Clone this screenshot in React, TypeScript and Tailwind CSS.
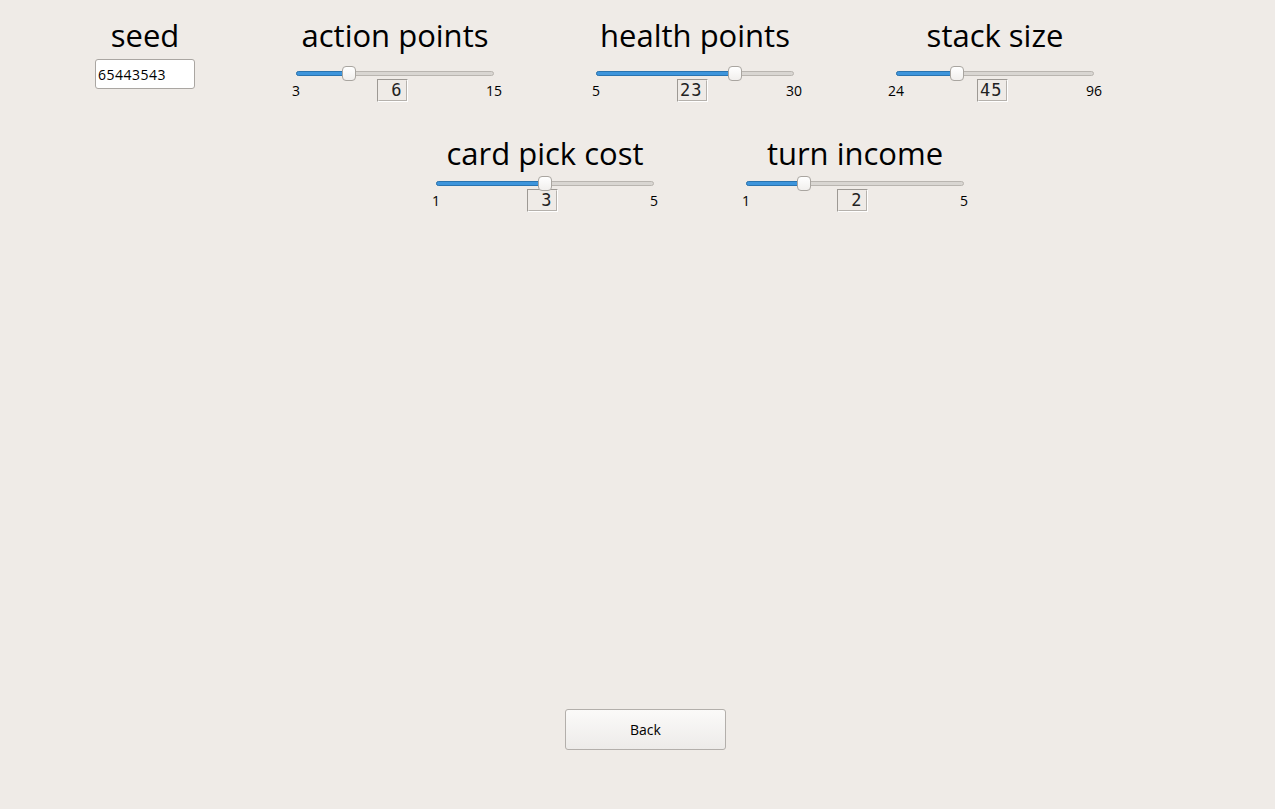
import React from "react";

type SliderProps = {
  title: string;
  min: number;
  max: number;
  value: number;
  trackWidth: number;
};

const titleFont = { fontFamily: '"Open Sans", "DejaVu Sans", sans-serif' };
const uiFont = { fontFamily: '"Open Sans", "DejaVu Sans", sans-serif' };

const Slider = ({ min, max, value, trackWidth }: Omit<SliderProps, "title">) => {
  const handle = 14;
  const left = ((value - min) / (max - min)) * (trackWidth - handle);
  return (
    <div className="relative h-[15px]" style={{ width: trackWidth }}>
      <div className="absolute left-0 right-0 top-[5px] h-[5px] rounded-full border border-[#b9b5b0] bg-[#d9d6d2]" />
      <div
        className="absolute left-0 top-[5px] h-[5px] rounded-l-full border border-[#2a74b0] bg-[#3d95dc]"
        style={{ width: left + handle / 2 }}
      />
      <div
        className="absolute top-0 h-[15px] w-[14px] rounded-[4px] border border-[#a9a5a0] bg-gradient-to-b from-white to-[#f1efed]"
        style={{ left }}
      />
    </div>
  );
};

const Lcd = ({ value }: { value: number }) => (
  <div className="h-[23px] w-[31px] border border-t-[#9d9994] border-l-[#9d9994] border-b-white border-r-white">
    <div
      className="flex h-full w-full items-center justify-end border border-b-[#b5b1ac] border-r-[#b5b1ac] border-t-transparent border-l-transparent pr-[3px] text-[17px] leading-none font-light text-[#222] tracking-[1px]"
      style={{ fontFamily: '"DejaVu Sans Mono", "Liberation Mono", monospace' }}
    >
      {value}
    </div>
  </div>
);

const SliderBox = ({ title, min, max, value, trackWidth, titleGap }: SliderProps & { titleGap: string }) => (
  <div className="flex w-[230px] flex-col items-center">
    <div className={`text-[31px] leading-[34px] text-black ${titleGap}`} style={titleFont}>
      {title}
    </div>
    <Slider min={min} max={max} value={value} trackWidth={trackWidth} />
    <div className="mt-[-2px] flex items-start" style={{ width: trackWidth }}>
      <div className="flex w-0 justify-center">
        <span className="mt-[3px] whitespace-nowrap text-[14px] leading-[18px] text-black" style={uiFont}>
          {min}
        </span>
      </div>
      <div className="flex flex-1 justify-center pr-[6px]">
        <Lcd value={value} />
      </div>
      <div className="flex w-0 justify-center">
        <span className="mt-[3px] whitespace-nowrap text-[14px] leading-[18px] text-black" style={uiFont}>
          {max}
        </span>
      </div>
    </div>
  </div>
);

export default function App() {
  return (
    <div className="flex h-[809px] w-full flex-col bg-[#efebe7]">
      <div className="flex items-start gap-[70px] pl-[80px] pt-[18px]">
        <div className="flex w-[130px] flex-col items-center">
          <div className="mb-[7px] text-[31px] leading-[34px] text-black" style={titleFont}>
            seed
          </div>
          <div
            className="flex h-[30px] w-[100px] items-center rounded-[3px] border border-[#aaa6a2] bg-white pl-[2px] text-[14px] tracking-[0.5px] text-black"
            style={uiFont}
          >
            65443543
          </div>
        </div>
        <SliderBox title="action points" min={3} max={15} value={6} trackWidth={198} titleGap="mb-[14px]" />
        <SliderBox title="health points" min={5} max={30} value={23} trackWidth={198} titleGap="mb-[14px]" />
        <SliderBox title="stack size" min={24} max={96} value={45} trackWidth={198} titleGap="mb-[14px]" />
      </div>
      <div className="flex items-start gap-[80px] pl-[430px] pt-[34px]">
        <SliderBox title="card pick cost" min={1} max={5} value={3} trackWidth={218} titleGap="mb-[6px]" />
        <SliderBox title="turn income" min={1} max={5} value={2} trackWidth={218} titleGap="mb-[6px]" />
      </div>
      <div className="flex-1" />
      <button
        className="mb-[59px] ml-[565px] h-[41px] w-[161px] self-start rounded-[3px] border border-[#b3afab] bg-gradient-to-b from-[#fbfaf9] to-[#edebe9] text-[14px] text-black"
        style={uiFont}
      >
        Back
      </button>
    </div>
  );
}
